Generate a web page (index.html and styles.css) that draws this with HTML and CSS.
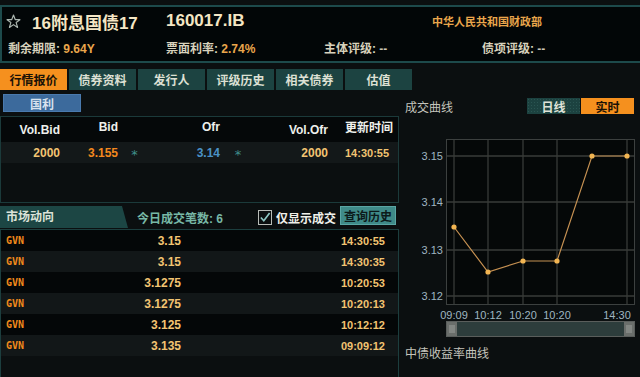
FILE: index.html
```html
<!DOCTYPE html>
<html>
<head>
<meta charset="utf-8">
<link rel="stylesheet" href="styles.css">
</head>
<body>
<div class="header">
  <div class="title-row">
    <span class="star"><svg width="15" height="15" viewBox="0 0 14 14"><polygon points="7,1 8.6,5.2 13,5.3 9.5,8 10.8,12.6 7,9.9 3.2,12.6 4.5,8 1,5.3 5.4,5.2" fill="none" stroke="#aab4ae" stroke-width="1.1" stroke-linejoin="round"/></svg></span>
    <span class="bond-name">16附息国债17</span>
    <span class="bond-code">160017.IB</span>
    <span class="issuer">中华人民共和国财政部</span>
  </div>
  <div class="info-row">
    <span class="info"><span class="lbl">剩余期限:</span> <span class="val">9.64Y</span></span>
    <span class="info"><span class="lbl">票面利率:</span> <span class="val">2.74%</span></span>
    <span class="info"><span class="lbl">主体评级:</span> <span class="val dim">--</span></span>
    <span class="info"><span class="lbl">债项评级:</span> <span class="val dim">--</span></span>
    <span class="info"><span class="lbl">债</span></span>
  </div>
</div>

<div class="tabs">
  <div class="tab active">行情报价</div>
  <div class="tab">债券资料</div>
  <div class="tab">发行人</div>
  <div class="tab">评级历史</div>
  <div class="tab">相关债券</div>
  <div class="tab">估值</div>
</div>

<div class="content">
  <div class="left">
    <div class="subtabs"><div class="subtab">国利</div></div>
    <div class="quote">
      <div class="qrow qhead">
        <span class="c1">Vol.Bid</span>
        <span class="c2 up">Bid</span>
        <span class="c3"></span>
        <span class="c4 up">Ofr</span>
        <span class="c5"></span>
        <span class="c6">Vol.Ofr</span>
        <span class="c7 up">更新时间</span>
      </div>
      <div class="qrow qdata">
        <span class="c1 num">2000</span>
        <span class="c2 bid">3.155</span>
        <span class="c3 ast">*</span>
        <span class="c4 ofr">3.14</span>
        <span class="c5 ast">*</span>
        <span class="c6 num">2000</span>
        <span class="c7 num time">14:30:55</span>
      </div>
    </div>
    <div class="market-head">
      <div class="mtab">市场动向</div>
      <div class="count">今日成交笔数: 6</div>
      <div class="check"><span class="box"><svg width="13" height="13" viewBox="0 0 13 13"><path d="M2 6.5 L5.2 10 L11.5 1.5" fill="none" stroke="#8ec8c4" stroke-width="1.8"/></svg></span><span class="check-lbl">仅显示成交</span></div>
      <div class="hist-btn">查询历史</div>
    </div>
    <div class="list">
      <div class="lrow"><span class="src">GVN</span><span class="price">3.15</span><span class="ltime">14:30:55</span></div>
      <div class="lrow alt"><span class="src">GVN</span><span class="price">3.15</span><span class="ltime">14:30:35</span></div>
      <div class="lrow"><span class="src">GVN</span><span class="price">3.1275</span><span class="ltime">10:20:53</span></div>
      <div class="lrow alt"><span class="src">GVN</span><span class="price">3.1275</span><span class="ltime">10:20:13</span></div>
      <div class="lrow"><span class="src">GVN</span><span class="price">3.125</span><span class="ltime">10:12:12</span></div>
      <div class="lrow alt"><span class="src">GVN</span><span class="price">3.135</span><span class="ltime">09:09:12</span></div>
    </div>
  </div>

  <div class="right">
    <div class="chart-head">
      <span class="chart-title">成交曲线</span>
      <div class="switch">
        <span class="sw">日线</span>
        <span class="sw on">实时</span>
      </div>
    </div>
    <svg class="chart" width="240" height="215" viewBox="0 0 240 215">
      <rect x="46.5" y="10.5" width="188" height="165" fill="#050808" stroke="#3c403f" stroke-width="1"/>
      <g stroke="#383b39" stroke-width="1.3">
        <line x1="54" y1="11" x2="54" y2="175"/>
        <line x1="88" y1="11" x2="88" y2="175"/>
        <line x1="123" y1="11" x2="123" y2="175"/>
        <line x1="157" y1="11" x2="157" y2="175"/>
        <line x1="227" y1="11" x2="227" y2="175"/>
        <line x1="47" y1="27" x2="234" y2="27"/>
        <line x1="47" y1="73" x2="234" y2="73"/>
        <line x1="47" y1="121" x2="234" y2="121"/>
        <line x1="47" y1="167" x2="234" y2="167"/>
      </g>
      <g class="ylab" text-anchor="end">
        <text x="43" y="31">3.15</text>
        <text x="43" y="77">3.14</text>
        <text x="43" y="125">3.13</text>
        <text x="43" y="171">3.12</text>
      </g>
      <polyline points="54,98 88,143 123,132 157,132 192,27 227,27" fill="none" stroke="#c69152" stroke-width="1.2"/>
      <g fill="#f2b552">
        <circle cx="54" cy="98" r="2.6"/>
        <circle cx="88" cy="143" r="2.6"/>
        <circle cx="123" cy="132" r="2.6"/>
        <circle cx="157" cy="132" r="2.6"/>
        <circle cx="192" cy="27" r="2.6"/>
        <circle cx="227" cy="27" r="2.6"/>
      </g>
      <g class="xlab" text-anchor="middle">
        <text x="54" y="190">09:09</text>
        <text x="88" y="190">10:12</text>
        <text x="123" y="190">10:20</text>
        <text x="157" y="190">10:20</text>
        <text x="217" y="190">14:30</text>
      </g>
      <rect x="46" y="192" width="189" height="16" fill="#5a5e5c"/>
      <rect x="47" y="193" width="187" height="14" fill="#2d3d3c"/>
      <rect x="47" y="193" width="10" height="14" fill="#6a6e6b"/>
      <rect x="224" y="193" width="10" height="14" fill="#6a6e6b"/>
      <g stroke="#a8aca8" stroke-width="0.8">
        <line x1="50" y1="196" x2="50" y2="204"/>
        <line x1="52" y1="196" x2="52" y2="204"/>
        <line x1="54" y1="196" x2="54" y2="204"/>
        <line x1="227" y1="196" x2="227" y2="204"/>
        <line x1="229" y1="196" x2="229" y2="204"/>
        <line x1="231" y1="196" x2="231" y2="204"/>
      </g>
    </svg>
    <div class="curve-title">中债收益率曲线</div>
  </div>
</div>
</body>
</html>
```
FILE: styles.css
```css
* { box-sizing: border-box; }
body {
  margin: 0;
  background: #0b0f10;
  font-family: "Liberation Sans", "Noto Sans CJK SC", sans-serif;
  color: #d8d4c4;
  width: 640px;
  height: 377px;
  overflow: hidden;
}
.header {
  margin-top: 5px;
  height: 58px;
  background: #020607;
  border-top: 2px solid #1d4a4b;
  border-bottom: 2px solid #1d4a4b;
  border-left: 2px solid #1d4a4b;
  padding-top: 3px;
  overflow: hidden;
}
.title-row {
  display: flex;
  align-items: center;
  height: 22px;
  white-space: nowrap;
}
.star {
  width: 30px;
  padding-left: 4px;
  display: flex;
  align-items: center;
}
.bond-name, .bond-code {
  font-size: 17px;
  font-weight: bold;
  color: #f4e6c4;
}
.bond-name { width: 134px; }
.bond-code { width: 266px; }
.issuer {
  font-size: 11px;
  font-weight: bold;
  color: #eaa64c;
}
.info-row {
  display: flex;
  margin-top: 9px;
  height: 16px;
  line-height: 16px;
  padding-left: 6px;
  font-size: 12px;
  font-weight: bold;
  white-space: nowrap;
  overflow: hidden;
}
.info { width: 158px; flex: none; }
.lbl { color: #d8d2bc; }
.val { color: #eaa64c; }
.val.dim { color: #c8c4b4; }

.tabs {
  display: flex;
  gap: 2px;
  margin-top: 6px;
  height: 21px;
}
.tab {
  width: 67px;
  background: #1c4341;
  color: #dde0d4;
  font-size: 12px;
  font-weight: bold;
  display: flex;
  align-items: center;
  justify-content: center;
}
.tab.active {
  background: #f5901e;
  color: #1a1206;
}

.content {
  display: flex;
  gap: 1px;
}
.left {
  width: 399px;
  flex: none;
}
.subtabs {
  padding: 4px 0 4px 3px;
}
.subtab {
  width: 78px;
  height: 18px;
  background: #3c6a9c;
  border: 1px solid #4a7aae;
  color: #d8e2ee;
  font-size: 12px;
  font-weight: bold;
  display: flex;
  align-items: center;
  justify-content: center;
}
.quote {
  height: 87px;
  border: 1px solid #1b3a3a;
  background: #0b0f10;
}
.qrow {
  display: grid;
  grid-template-columns: 59px 58px 33px 69px 36px 72px 1fr;
  align-items: center;
  font-size: 12px;
  font-weight: bold;
}
.qhead {
  height: 25px;
  background: #050809;
  color: #eef0ec;
}
.qhead .up { padding-bottom: 6px; }
.qdata {
  height: 21px;
  background: #131819;
}
.c1, .c2, .c4, .c6 { text-align: right; }
.c3, .c5 { text-align: center; }
.c7 { padding-left: 17px; }
.num { color: #f2c472; }
.time { font-size: 11px; }
.bid { color: #f2881e; }
.ofr { color: #4a92c6; }
.ast {
  color: #3f8f8c;
  font-weight: normal;
  font-family: "DejaVu Sans", sans-serif;
  font-size: 13px;
  line-height: 13px;
  padding-top: 3px;
}

.market-head {
  display: flex;
  align-items: center;
  margin-top: 3px;
  height: 23px;
}
.mtab {
  width: 128px;
  height: 22px;
  align-self: flex-start;
  background: #1c4644;
  clip-path: polygon(0 0, 122px 0, 128px 100%, 0 100%);
  color: #dbe2d8;
  font-size: 12px;
  font-weight: bold;
  padding-left: 6px;
  line-height: 22px;
}
.count {
  margin-left: 9px;
  width: 121px;
  color: #78b8a6;
  font-size: 12px;
  font-weight: bold;
}
.check {
  display: flex;
  align-items: center;
  width: 82px;
}
.box {
  width: 14px;
  height: 15px;
  border: 1px solid #b8bcb8;
  display: flex;
  align-items: center;
  justify-content: center;
  margin-right: 4px;
}
.check-lbl {
  color: #f0f0ea;
  font-size: 12px;
  font-weight: bold;
}
.hist-btn {
  width: 56px;
  height: 19px;
  align-self: flex-start;
  background: #3f8a88;
  border: 1px solid #5aa6a4;
  color: #0c1a1a;
  font-size: 12px;
  font-weight: bold;
  display: flex;
  align-items: center;
  justify-content: center;
}

.list {
  border-top: 1px solid #1c3e3e;
  border-left: 1px solid #1c3e3e;
  border-right: 1px solid #1c3e3e;
  height: 150px;
  background: #0b0f10;
}
.lrow {
  display: flex;
  align-items: center;
  height: 21px;
  background: #040708;
  font-weight: bold;
}
.lrow.alt { background: #121718; }
.src {
  width: 60px;
  padding-left: 5px;
  font-family: "DejaVu Sans Mono", monospace;
  font-size: 10px;
  color: #f08a1c;
}
.price {
  width: 120px;
  text-align: right;
  font-size: 12px;
  color: #f2c472;
}
.ltime {
  width: 204px;
  text-align: right;
  font-size: 11px;
  color: #f2c472;
}

.right {
  width: 240px;
  flex: none;
}
.chart-head {
  display: flex;
  align-items: center;
  margin-top: 8px;
  height: 16px;
  padding-left: 5px;
}
.chart-title {
  color: #c4c4bc;
  font-size: 12px;
  width: 122px;
}
.switch {
  display: flex;
  gap: 1px;
}
.sw {
  width: 53px;
  height: 16px;
  background: #1c4240;
  background-image: radial-gradient(#2a5552 0.6px, transparent 0.7px);
  background-size: 3px 3px;
  color: #dfe2d8;
  font-size: 12px;
  font-weight: bold;
  display: flex;
  align-items: center;
  justify-content: center;
}
.sw.on {
  background: #f5901e;
  color: #1a1206;
}
.chart {
  display: block;
  margin-top: 15px;
}
.ylab text, .xlab text {
  font-family: "Liberation Sans", sans-serif;
  font-size: 11px;
  fill: #9fb6c0;
}
.curve-title {
  margin-top: 2px;
  padding-left: 5px;
  height: 16px;
  line-height: 16px;
  color: #c4c4bc;
  font-size: 12px;
}
```
